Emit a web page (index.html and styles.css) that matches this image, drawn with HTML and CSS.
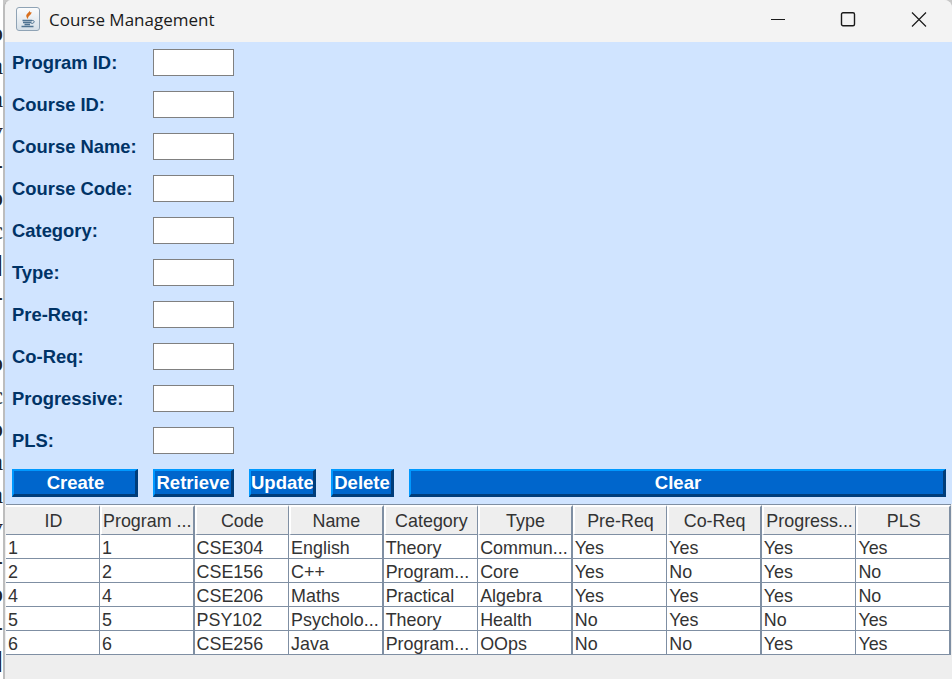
FILE: index.html
```html
<!DOCTYPE html>
<html lang="en">
<head>
<meta charset="utf-8">
<title>Course Management</title>
<link rel="stylesheet" href="styles.css">
</head>
<body>
<div class="screen">
  <div class="behind" aria-hidden="true">
    <span>o</span><span>a</span><span>a</span><span>v</span><span>-</span><span>o</span><span>c</span><span>]</span><span>-</span><span></span><span>o</span><span>c</span><span>o</span><span>a</span><span>a</span><span>v</span><span>-</span><span>o</span><span>-</span><span>]</span>
  </div>
  <div class="window">
    <header class="titlebar">
      <div class="app-icon">
        <svg width="20" height="20" viewBox="0 0 20 20"><path d="M11.500 0.500c1.500 2.500-4.500 4-3 7.500.3.900 1 1.700 1.700 2.200C9 7 14 6 13.500 3 12.700 4 11.800 3.500 11.500 0.500z" fill="#d9701f"/><path d="M4.500 11.500h9.500M5 13.500h8.500M6.500 15.500h5.500M3.500 17.500h12" stroke="#4f7391" stroke-width="1.300" fill="none"/><path d="M14 11.500c3-.6 3 3-.6 3" stroke="#4f7391" fill="none"/></svg>
      </div>
      <span class="title">Course Management</span>
      <div class="controls">
        <svg class="ctl" width="16" height="16" viewBox="0 0 16 16"><path d="M2 7.500h14" stroke="#1a1a1a" fill="none"/></svg>
        <svg class="ctl" width="16" height="16" viewBox="0 0 16 16"><rect x="1.500" y="0.700" width="13" height="13" rx="1.500" stroke="#1a1a1a" stroke-width="1.400" fill="none"/></svg>
        <svg class="ctl" width="16" height="16" viewBox="0 0 16 16"><path d="M1 0.500l14 14M15 0.500L1 14.500" stroke="#1a1a1a" stroke-width="1.200" fill="none"/></svg>
      </div>
    </header>
    <main class="panel">
      <form class="fields">
        <label class="field"><span class="field-label">Program ID:</span><input class="field-input" type="text"></label>
        <label class="field"><span class="field-label">Course ID:</span><input class="field-input" type="text"></label>
        <label class="field"><span class="field-label">Course Name:</span><input class="field-input" type="text"></label>
        <label class="field"><span class="field-label">Course Code:</span><input class="field-input" type="text"></label>
        <label class="field"><span class="field-label">Category:</span><input class="field-input" type="text"></label>
        <label class="field"><span class="field-label">Type:</span><input class="field-input" type="text"></label>
        <label class="field"><span class="field-label">Pre-Req:</span><input class="field-input" type="text"></label>
        <label class="field"><span class="field-label">Co-Req:</span><input class="field-input" type="text"></label>
        <label class="field"><span class="field-label">Progressive:</span><input class="field-input" type="text"></label>
        <label class="field"><span class="field-label">PLS:</span><input class="field-input" type="text"></label>
      </form>
      <div class="actions">
        <button class="btn btn-create" type="button">Create</button>
        <button class="btn btn-retrieve" type="button">Retrieve</button>
        <button class="btn btn-update" type="button">Update</button>
        <button class="btn btn-delete" type="button">Delete</button>
        <button class="btn btn-clear" type="button">Clear</button>
      </div>
    </main>
    <div class="table-area">
      <table class="grid">
        <thead>
          <tr><th>ID</th><th>Program ...</th><th>Code</th><th>Name</th><th>Category</th><th>Type</th><th>Pre-Req</th><th>Co-Req</th><th>Progress...</th><th>PLS</th></tr>
        </thead>
        <tbody>
          <tr><td>1</td><td>1</td><td>CSE304</td><td>English</td><td>Theory</td><td>Commun...</td><td>Yes</td><td>Yes</td><td>Yes</td><td>Yes</td></tr>
          <tr><td>2</td><td>2</td><td>CSE156</td><td>C++</td><td>Program...</td><td>Core</td><td>Yes</td><td>No</td><td>Yes</td><td>No</td></tr>
          <tr><td>4</td><td>4</td><td>CSE206</td><td>Maths</td><td>Practical</td><td>Algebra</td><td>Yes</td><td>Yes</td><td>Yes</td><td>No</td></tr>
          <tr><td>5</td><td>5</td><td>PSY102</td><td>Psycholo...</td><td>Theory</td><td>Health</td><td>No</td><td>Yes</td><td>No</td><td>Yes</td></tr>
          <tr><td>6</td><td>6</td><td>CSE256</td><td>Java</td><td>Program...</td><td>OOps</td><td>No</td><td>No</td><td>Yes</td><td>Yes</td></tr>
        </tbody>
      </table>
    </div>
  </div>
</div>
</body>
</html>
```

FILE: styles.css
```css
* { box-sizing: border-box; }
html, body { margin: 0; padding: 0; height: 100%; overflow: hidden; background: #fff; }
.screen { display: flex; width: 952px; height: 679px; overflow: hidden; background: #c8c8c8; }

.behind {
  width: 3px; flex: none; overflow: hidden; display: flex; flex-direction: column;
  background: #fff; padding-top: 16px;
  font: 26px/33px "Liberation Serif", serif; color: #222;
}
.behind span { display: flex; justify-content: flex-end; flex: none; height: 33px; }

.window {
  flex: 1; display: flex; flex-direction: column; min-width: 0;
  border-left: 2px solid #bdbdbd; background: #eeeeee;
  border-radius: 8px 8px 0 0; overflow: hidden;
}

.titlebar {
  height: 42px; flex: none; display: flex; align-items: center;
  background: #f3f3f3; padding-left: 11px;
}
.app-icon {
  width: 24px; height: 24px; flex: none; display: flex; align-items: center; justify-content: center;
  margin-bottom: 4px;
  border: 1px solid #8fa3b5; border-radius: 3px;
  background: linear-gradient(#fbfcfd, #d6e0e8);
}
.title { margin-left: 9px; padding-bottom: 4px; font: 17px "Open Sans", "Noto Sans", sans-serif; color: #1a1a1a; }
.controls { margin-left: auto; display: flex; gap: 55px; padding: 0 25px 2px 0; }
.ctl { display: block; }

.panel { height: 462px; flex: none; background: #d0e4ff; padding: 7px 6px 0 7px; }
.fields { display: flex; flex-direction: column; gap: 15px; }
.field { display: flex; align-items: center; height: 27px; }
.field-label {
  width: 141px; flex: none;
  font: bold 18.400px "Liberation Sans", Arial, sans-serif; color: #003366;
}
.field-input { width: 81px; height: 27px; border: 1px solid #808080; background: #fff; padding: 0; margin: 0; }

.actions { display: flex; gap: 15px; margin-top: 15px; }
.btn {
  height: 28px; padding: 0; margin: 0; flex: none;
  font: bold 18.500px "Liberation Sans", Arial, sans-serif; color: #fff;
  background: #0066cc;
  border-style: solid; border-width: 2px 3px 3px 2px;
  border-color: #0099ff #003d7a #003d7a #0099ff;
  white-space: nowrap; overflow: hidden;
}
.btn-create { width: 126px; padding-left: 2px; }
.btn-retrieve { width: 81px; }
.btn-update { width: 67px; }
.btn-delete { width: 63px; }
.btn-clear { flex: 1; padding-left: 2px; }

.table-area { flex: 1; min-height: 0; padding-left: 1px; }
.grid {
  table-layout: fixed; width: 945px; border-collapse: separate; border-spacing: 0;
  font: 17.900px/19px "Liberation Sans", Arial, sans-serif; color: #333;
  border-top: 1px solid #7f8fa3;
}
.grid th, .grid td {
  overflow: hidden; white-space: nowrap; padding: 0;
  border-right: 1px solid #7f8fa3; border-bottom: 1px solid #7f8fa3;
}
.grid th {
  height: 30px; padding-top: 1px; font-weight: normal; text-align: center; background: #eeeeee;
  border-left: 2px solid #fff; border-top: 2px solid #fff;
}
.grid th:first-child { width: 94px; border-left: 0; padding-left: 2px; }
.grid td { height: 24px; padding: 4px 0 0 2px; background: #fff; }
.grid th:nth-child(even), .grid td:nth-child(even) { border-right-width: 2px; }
```
